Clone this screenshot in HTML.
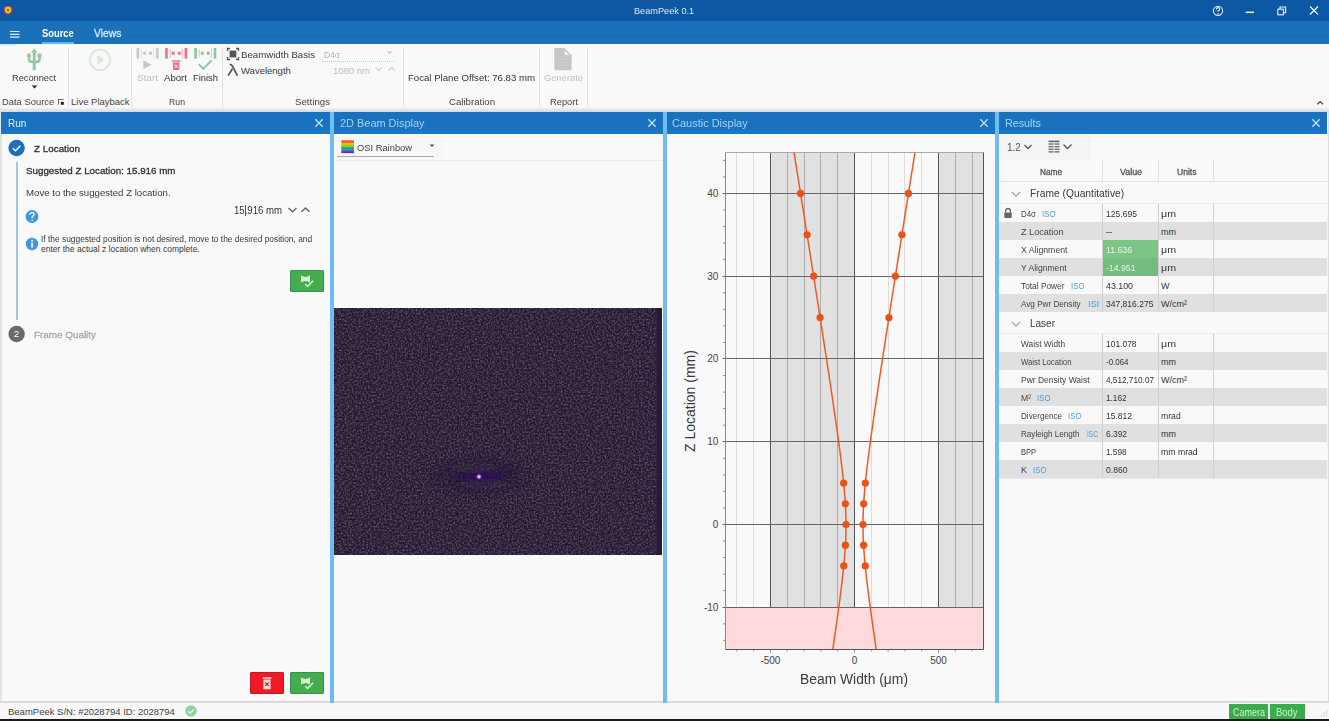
<!DOCTYPE html><html><head><meta charset="utf-8"><style>
html,body{margin:0;padding:0;width:1329px;height:721px;overflow:hidden;background:#f8f8f8}
body{position:relative;font-family:"Liberation Sans",sans-serif}
#wrap{position:absolute;left:0;top:0;width:1329px;height:721px;overflow:hidden}
.r{position:absolute;display:block}
.t{position:absolute;white-space:nowrap;line-height:1;transform-origin:0 0}
</style></head><body><div id="wrap">
<div class="r" style="left:0px;top:0px;width:1329px;height:721px;background:#f8f8f8;"></div>
<div class="r" style="left:0px;top:0px;width:1329px;height:21px;background:#0d57a3;"></div>
<svg class="r" style="left:0px;top:0px;" width="20" height="20" viewBox="0 0 20 20"><circle cx="8" cy="10" r="5.6" fill="#5a3aa0"/><circle cx="8" cy="10" r="3.4" fill="#f2c200"/><circle cx="8" cy="10" r="1.1" fill="#8a4a10"/></svg>
<div class="t" style="left:633.90px;top:6.88px;font-size:9px;color:#d6eaff;transform:scaleX(1.020);">BeamPeek 0.1</div>
<svg class="r" style="left:1200px;top:0px;" width="129" height="20" viewBox="0 0 129 20"><g fill="none" stroke="#e8f2ff" stroke-width="1.1"><circle cx="18" cy="10.8" r="4.6"/><path d="M16.3 9.4 q0-1.8 1.7-1.8 q1.7 0 1.7 1.6 q0 1.1-1.6 1.7 v0.9" /></g><circle cx="18.1" cy="13.7" r="0.6" fill="#e8f2ff"/><path d="M45.8 12.3 h8.2" stroke="#e8f2ff" stroke-width="1.5"/><g fill="none" stroke="#e8f2ff" stroke-width="1.1"><rect x="77.8" y="9.2" width="5.6" height="5.6"/><path d="M80 9.2 v-2.2 h5.6 v5.6 h-2.2"/></g><path d="M110 6.5 l8 8 M118 6.5 l-8 8" stroke="#e8f2ff" stroke-width="1.3"/></svg>
<div class="r" style="left:0px;top:21px;width:1329px;height:23px;background:#1b70ba;"></div>
<div class="r" style="left:128px;top:34.5px;width:1201px;height:1.0px;background:#1968ae;"></div>
<svg class="r" style="left:8px;top:28px;" width="14" height="12" viewBox="0 0 14 12"><path d="M2 3.5 h9.5 M2 6.3 h9.5 M2 9.1 h9.5" stroke="#d8ecff" stroke-width="1.2"/></svg>
<div class="t" style="left:41.60px;top:27.71px;font-size:10.5px;color:#ffffff;font-weight:bold;transform:scaleX(0.891);">Source</div>
<div class="r" style="left:41.5px;top:42px;width:32.5px;height:2px;background:#5fb4f3;"></div>
<div class="t" style="left:94.00px;top:27.91px;font-size:10.5px;color:#d2e8fc;-webkit-text-stroke:0.3px #d2e8fc;transform:scaleX(0.981);">Views</div>
<div class="r" style="left:0px;top:44px;width:1329px;height:66px;background:#f9f9f9;"></div>
<div class="r" style="left:0px;top:108px;width:1329px;height:4px;background:linear-gradient(#f2f2f2,#d6d6d6);"></div>
<div class="r" style="left:0px;top:44px;width:16px;height:2px;background:#dff1fd;"></div>
<div class="r" style="left:68px;top:48px;width:1px;height:59px;background:#e2e2e2;"></div>
<div class="r" style="left:131px;top:48px;width:1px;height:59px;background:#e2e2e2;"></div>
<div class="r" style="left:222px;top:48px;width:1px;height:59px;background:#e2e2e2;"></div>
<div class="r" style="left:403px;top:48px;width:1px;height:59px;background:#e2e2e2;"></div>
<div class="r" style="left:539px;top:48px;width:1px;height:59px;background:#e2e2e2;"></div>
<div class="r" style="left:587px;top:48px;width:1px;height:59px;background:#e2e2e2;"></div>
<svg class="r" style="left:24px;top:46px;" width="20" height="26" viewBox="0 0 20 26"><g fill="#97c8a1" stroke="#97c8a1"><path d="M10.2 2.6 l3.2 4 h-1.7 v17.6 h-3 v-17.6 h-1.7 z" stroke="none"/><path d="M5 10 v3.2 q0 2.6 2.6 2.6 h5" fill="none" stroke-width="2.6"/><path d="M15.5 10 v3.2 q0 2.6 -2.6 2.6 h-3" fill="none" stroke-width="2.6"/><circle cx="5" cy="9.4" r="2.1" stroke="none"/><rect x="13.4" y="7.6" width="4.2" height="3.8" stroke="none"/></g></svg>
<div class="t" style="left:11.70px;top:73.36px;font-size:9.5px;color:#3a3a3a;transform:scaleX(0.973);">Reconnect</div>
<svg class="r" style="left:30px;top:84px;" width="9" height="6" viewBox="0 0 9 6"><path d="M1.8 1.6 h5.4 l-2.7 2.8 z" fill="#222"/></svg>
<div class="t" style="left:1.80px;top:97.36px;font-size:9.5px;color:#444;transform:scaleX(0.989);">Data Source</div>
<svg class="r" style="left:57px;top:98px;" width="8" height="8" viewBox="0 0 8 8"><path d="M1.5 6.5 v-5 h5" stroke="#666" stroke-width="1.1" fill="none"/><rect x="3.8" y="3.8" width="3" height="3" fill="#222"/></svg>
<svg class="r" style="left:86px;top:46px;" width="28" height="28" viewBox="0 0 28 28"><circle cx="14" cy="13.8" r="10.2" fill="none" stroke="#d5ead8" stroke-width="1.8"/><path d="M11.4 8.8 l7 5 l-7 5 z" fill="#d5ead8"/></svg>
<div class="t" style="left:71.00px;top:97.36px;font-size:9.5px;color:#444;">Live Playback</div>
<svg class="r" style="left:0px;top:0px;pointer-events:none" width="230" height="80" viewBox="0 0 230 80"><rect x="136.6" y="48" width="2.6" height="10.6" fill="#c9c9c9"/><rect x="156.0" y="48" width="2.6" height="10.6" fill="#c9c9c9"/><rect x="141.1" y="49" width="0.9" height="8.6" fill="#c9c9c9" opacity="0.6"/><rect x="153.2" y="49" width="0.9" height="8.6" fill="#c9c9c9" opacity="0.6"/><rect x="143.2" y="51.6" width="2.8" height="3.2" fill="#c9c9c9"/><rect x="149.2" y="51.6" width="2.8" height="3.2" fill="#c9c9c9"/><path d="M143.3 60.6 l8.3 4.2 l-8.3 4.2 z" fill="#c6c6c6"/><rect x="165.2" y="48" width="2.6" height="10.6" fill="#ec7482"/><rect x="184.6" y="48" width="2.6" height="10.6" fill="#ec7482"/><rect x="169.7" y="49" width="0.9" height="8.6" fill="#ec7482" opacity="0.6"/><rect x="181.79999999999998" y="49" width="0.9" height="8.6" fill="#ec7482" opacity="0.6"/><rect x="171.79999999999998" y="51.6" width="2.8" height="3.2" fill="#ec7482"/><rect x="177.79999999999998" y="51.6" width="2.8" height="3.2" fill="#ec7482"/><path d="M171.8 60.2 h8.6 v1.6 h-8.6 z M172.6 62.4 h7 l-0.6 7.6 h-5.8 z" fill="#ec7482"/><path d="M174.6 64.6 l3 3 M177.6 64.6 l-3 3" stroke="#fff" stroke-width="0.9"/><rect x="194.3" y="48" width="2.6" height="10.6" fill="#8fc59b"/><rect x="213.70000000000002" y="48" width="2.6" height="10.6" fill="#8fc59b"/><rect x="198.8" y="49" width="0.9" height="8.6" fill="#8fc59b" opacity="0.6"/><rect x="210.9" y="49" width="0.9" height="8.6" fill="#8fc59b" opacity="0.6"/><rect x="200.9" y="51.6" width="2.8" height="3.2" fill="#8fc59b"/><rect x="206.9" y="51.6" width="2.8" height="3.2" fill="#8fc59b"/><path d="M198.8 64.2 l4.4 4.6 l8.4 -8.4" fill="none" stroke="#8fc59b" stroke-width="1.9"/></svg>
<div class="t" style="left:137.00px;top:73.36px;font-size:9.5px;color:#bdbdbd;transform:scaleX(1.047);">Start</div>
<div class="t" style="left:164.00px;top:73.36px;font-size:9.5px;color:#333;transform:scaleX(1.013);">Abort</div>
<div class="t" style="left:193.00px;top:73.36px;font-size:9.5px;color:#333;transform:scaleX(0.987);">Finish</div>
<div class="t" style="left:169.00px;top:97.36px;font-size:9.5px;color:#444;transform:scaleX(0.918);">Run</div>
<svg class="r" style="left:226px;top:47px;" width="14" height="14" viewBox="0 0 14 14"><path d="M1.5 4 v-2.5 h2.5 M10 1.5 h2.5 v2.5 M12.5 10 v2.5 h-2.5 M4 12.5 h-2.5 v-2.5" fill="none" stroke="#555" stroke-width="1.4"/><rect x="3.6" y="3.6" width="6.8" height="6.8" fill="#555"/></svg>
<div class="t" style="left:241.00px;top:50.16px;font-size:9.5px;color:#3a3a3a;transform:scaleX(1.016);">Beamwidth Basis</div>
<div class="t" style="left:324.00px;top:50.16px;font-size:9.5px;color:#b4b4b4;transform:scaleX(0.889);">D4σ</div>
<svg class="r" style="left:386px;top:50px;" width="8" height="6" viewBox="0 0 8 6"><path d="M1 1.5 h5 l-2.5 2.6 z" fill="#c4c4c4"/></svg>
<div class="r" style="left:322px;top:61px;width:72px;height:0;border-top:1px dotted #c8c8c8"></div>
<svg class="r" style="left:226px;top:63px;" width="14" height="14" viewBox="0 0 14 14"><path d="M2.2 12.6 l4.2 -6.8 M3.6 1.4 q2.2 0 3 2 l4.8 9.2" fill="none" stroke="#555" stroke-width="1.7"/></svg>
<div class="t" style="left:241.00px;top:65.96px;font-size:9.5px;color:#3a3a3a;">Wavelength</div>
<div class="t" style="left:333.00px;top:65.96px;font-size:9.5px;color:#c0c0c0;">1080 nm</div>
<svg class="r" style="left:372px;top:64px;" width="28" height="10" viewBox="0 0 28 10"><path d="M3.5 3.5 l3.2 3 l3.2 -3" fill="none" stroke="#cfcfcf" stroke-width="1.2"/><path d="M16.5 6.5 l3.2 -3 l3.2 3" fill="none" stroke="#cfcfcf" stroke-width="1.2"/></svg>
<div class="t" style="left:295.00px;top:97.36px;font-size:9.5px;color:#444;transform:scaleX(1.020);">Settings</div>
<div class="t" style="left:408.00px;top:72.56px;font-size:9.5px;color:#333;transform:scaleX(1.012);">Focal Plane Offset: 76.83 mm</div>
<div class="t" style="left:449.00px;top:97.36px;font-size:9.5px;color:#444;transform:scaleX(1.013);">Calibration</div>
<svg class="r" style="left:550px;top:46px;" width="26" height="28" viewBox="0 0 26 28"><path d="M4.2 2 h10.3 l7.2 7.2 v15.1 h-17.5 z" fill="#cbcbcb"/><path d="M14.6 4.6 l4.6 4.6 h-4.6 z" fill="#fafafa"/><rect x="7" y="12" width="9" height="11" fill="#e3c6cc" opacity="0.55"/><g stroke="#bdbdbd" stroke-width="0.5"><path d="M5 6 h9 M5 9 h16 M5 12 h16 M5 15 h16 M5 18 h16 M5 21 h16 M7 2 v22 M10 2 v22 M13 2 v22 M16 9 v15 M19 9 v15"/></g></svg>
<div class="t" style="left:544.00px;top:72.56px;font-size:9.5px;color:#c4c4c4;transform:scaleX(0.985);">Generate</div>
<div class="t" style="left:550.00px;top:97.36px;font-size:9.5px;color:#444;transform:scaleX(0.982);">Report</div>
<svg class="r" style="left:1314px;top:98px;" width="12" height="10" viewBox="0 0 12 10"><path d="M3.4 6.2 l2.8 -2.6 l2.8 2.6" fill="none" stroke="#444" stroke-width="1.3"/></svg>
<div class="r" style="left:0px;top:112px;width:1329px;height:591px;background:#f9f9f9;"></div>
<div class="r" style="left:0px;top:112px;width:1.5px;height:591px;background:#e4e4e4;"></div>
<div class="r" style="left:1327px;top:112px;width:2px;height:591px;background:#f6f6f6;"></div>
<div class="r" style="left:1327.6px;top:112px;width:1.400000000000091px;height:591px;background:#dcdcdc;"></div>
<div class="r" style="left:1px;top:112px;width:329px;height:22px;background:#1a71bd;"></div>
<div class="r" style="left:1px;top:129.5px;width:329px;height:4.5px;background:#1c76c6;"></div>
<div class="r" style="left:334px;top:112px;width:329px;height:22px;background:#1a71bd;"></div>
<div class="r" style="left:334px;top:129.5px;width:329px;height:4.5px;background:#1c76c6;"></div>
<div class="r" style="left:667px;top:112px;width:328px;height:22px;background:#1a71bd;"></div>
<div class="r" style="left:667px;top:129.5px;width:328px;height:4.5px;background:#1c76c6;"></div>
<div class="r" style="left:999px;top:112px;width:328px;height:22px;background:#1a71bd;"></div>
<div class="r" style="left:999px;top:129.5px;width:328px;height:4.5px;background:#1c76c6;"></div>
<div class="r" style="left:0px;top:701px;width:1329px;height:2px;background:#dadada;"></div>
<div class="r" style="left:330px;top:112px;width:4px;height:591px;background:#6fbcf2;"></div>
<div class="r" style="left:663px;top:112px;width:4px;height:591px;background:#6fbcf2;"></div>
<div class="r" style="left:995px;top:112px;width:4px;height:591px;background:#6fbcf2;"></div>
<svg class="r" style="left:312.5px;top:117px;" width="12" height="12" viewBox="0 0 12 12"><path d="M2.3 2.3 l7.4 7.4 M9.7 2.3 l-7.4 7.4" stroke="#c4e2fb" stroke-width="1.3"/></svg>
<svg class="r" style="left:645.5px;top:117.3px;" width="12" height="12" viewBox="0 0 12 12"><path d="M2.3 2.3 l7.4 7.4 M9.7 2.3 l-7.4 7.4" stroke="#c4e2fb" stroke-width="1.3"/></svg>
<svg class="r" style="left:978px;top:117.3px;" width="12" height="12" viewBox="0 0 12 12"><path d="M2.3 2.3 l7.4 7.4 M9.7 2.3 l-7.4 7.4" stroke="#c4e2fb" stroke-width="1.3"/></svg>
<svg class="r" style="left:1310px;top:117.3px;" width="12" height="12" viewBox="0 0 12 12"><path d="M2.3 2.3 l7.4 7.4 M9.7 2.3 l-7.4 7.4" stroke="#c4e2fb" stroke-width="1.3"/></svg>
<div class="t" style="left:7.80px;top:117.81px;font-size:10.5px;color:#e2f0fc;transform:scaleX(0.955);">Run</div>
<div class="t" style="left:339.60px;top:117.81px;font-size:10.5px;color:#a6d3f8;transform:scaleX(1.041);">2D Beam Display</div>
<div class="t" style="left:672.30px;top:117.81px;font-size:10.5px;color:#a6d3f8;transform:scaleX(1.046);">Caustic Display</div>
<div class="t" style="left:1004.80px;top:117.81px;font-size:10.5px;color:#a6d3f8;transform:scaleX(1.023);">Results</div>
<div class="r" style="left:0px;top:703px;width:1329px;height:16px;background:#f8f8f8;"></div>
<div class="r" style="left:0px;top:719px;width:1329px;height:2px;background:#1a1a1a;"></div>
<div class="t" style="left:8.00px;top:707.36px;font-size:9.5px;color:#444;">BeamPeek S/N: #2028794 ID: 2028794</div>
<svg class="r" style="left:184px;top:704px;" width="14" height="14" viewBox="0 0 14 14"><circle cx="7" cy="7" r="5.8" fill="#90d2a0"/><path d="M4.2 7.2 l2 2 l3.8 -3.8" fill="none" stroke="#fff" stroke-width="1.3"/></svg>
<div class="r" style="left:1228.6px;top:704px;width:39.40000000000009px;height:15px;background:#3cab4b;"></div>
<div class="r" style="left:1269.6px;top:704px;width:35.40000000000009px;height:15px;background:#3cab4b;"></div>
<svg class="r" style="left:1318px;top:708px;" width="11" height="11" viewBox="0 0 11 11"><g fill="#c8c8c8"><rect x="8" y="2" width="1.3" height="1.3"/><rect x="5.5" y="4.5" width="1.3" height="1.3"/><rect x="8" y="4.5" width="1.3" height="1.3"/><rect x="3" y="7" width="1.3" height="1.3"/><rect x="5.5" y="7" width="1.3" height="1.3"/><rect x="8" y="7" width="1.3" height="1.3"/></g></svg>
<div class="t" style="left:1233.00px;top:706.61px;font-size:10.5px;color:#c9f2c9;transform:scaleX(0.857);">Camera</div>
<div class="t" style="left:1276.00px;top:706.61px;font-size:10.5px;color:#c9f2c9;transform:scaleX(0.898);">Body</div>
<svg class="r" style="left:7px;top:139px;" width="20" height="18" viewBox="0 0 20 18"><circle cx="9.6" cy="9" r="8.2" fill="#1b6fbd"/><path d="M5.8 9.2 l2.6 2.6 l5 -5" fill="none" stroke="#fff" stroke-width="1.4"/></svg>
<div class="t" style="left:33.50px;top:144.26px;font-size:9.5px;color:#333;-webkit-text-stroke:0.3px #333;transform:scaleX(1.037);">Z Location</div>
<div class="r" style="left:16.3px;top:162px;width:1.5px;height:157.5px;background:#a0c4e8;"></div>
<div class="t" style="left:25.50px;top:166.46px;font-size:9.5px;color:#333;-webkit-text-stroke:0.3px #333;transform:scaleX(1.029);">Suggested Z Location: 15.916 mm</div>
<div class="t" style="left:25.50px;top:188.46px;font-size:9.5px;color:#3a3a3a;transform:scaleX(1.014);">Move to the suggested Z location.</div>
<svg class="r" style="left:24px;top:208px;" width="16" height="16" viewBox="0 0 16 16"><circle cx="8" cy="8.5" r="6.4" fill="#3d97e6"/><path d="M5.9 6.8 q0-2.2 2.1-2.2 q2.1 0 2.1 2 q0 1.3-1.9 2 v1.3" fill="none" stroke="#fff" stroke-width="1.3"/><circle cx="8.2" cy="12.1" r="0.8" fill="#fff"/></svg>
<div class="t" style="left:234.00px;top:205.84px;font-size:10px;color:#333;transform:scaleX(0.960);">15.916 mm</div>
<div class="r" style="left:245.2px;top:205px;width:0.8000000000000114px;height:10.5px;background:#555;"></div>
<svg class="r" style="left:284px;top:204px;" width="30" height="12" viewBox="0 0 30 12"><path d="M4.5 4 l4 3.8 l4 -3.8" fill="none" stroke="#666" stroke-width="1.4"/><path d="M17.5 7.8 l4 -3.8 l4 3.8" fill="none" stroke="#666" stroke-width="1.4"/></svg>
<svg class="r" style="left:24px;top:236px;" width="16" height="16" viewBox="0 0 16 16"><circle cx="8" cy="8" r="6.2" fill="#3d97e6"/><rect x="7.2" y="6.6" width="1.7" height="5" fill="#fff"/><circle cx="8.05" cy="4.8" r="0.95" fill="#fff"/></svg>
<div class="t" style="left:41.00px;top:235.40px;font-size:8.5px;color:#3a3a3a;transform:scaleX(0.986);">If the suggested position is not desired, move to the desired position, and</div>
<div class="t" style="left:41.00px;top:244.80px;font-size:8.5px;color:#3a3a3a;">enter the actual z location when complete.</div>
<div class="r" style="left:290px;top:270px;width:34.19999999999999px;height:22px;background:#45ad4f;border-radius:2px;box-shadow:inset 0 0 0 1px #368f55"></div>
<svg class="r" style="left:298.1px;top:273.0px;" width="18" height="16" viewBox="0 0 18 16"><path d="M3 2.2 Q7.5 5.6 12 2.2 V9.6 Q7.5 6.2 3 9.6 Z" fill="#d6f5cf"/><path d="M7.2 11 l2.4 2.4 l5.6 -5.6" fill="none" stroke="#d6f5cf" stroke-width="1.5"/></svg>
<svg class="r" style="left:7px;top:325px;" width="20" height="18" viewBox="0 0 20 18"><circle cx="9.6" cy="9" r="8.2" fill="#6a6a6a"/></svg>
<div class="t" style="left:14.00px;top:330.18px;font-size:9px;color:#fff;transform:scaleX(1.039);">2</div>
<div class="t" style="left:33.50px;top:329.76px;font-size:9.5px;color:#a8a8a8;-webkit-text-stroke:0.3px #a8a8a8;transform:scaleX(1.039);">Frame Quality</div>
<div class="r" style="left:249.7px;top:672px;width:34.30000000000001px;height:22px;background:#ee1b24;border-radius:2px;box-shadow:inset 0 0 0 1px #c0192a"></div>
<svg class="r" style="left:258px;top:674px;" width="18" height="18" viewBox="0 0 18 18"><path d="M4.6 3.2 h8.8 v1.6 h-8.8 z M5.4 5.6 h7.2 v9.6 h-7.2 z" fill="#ffd9dc"/><path d="M7.3 8.5 l3.4 3.4 M10.7 8.5 l-3.4 3.4" stroke="#d01a26" stroke-width="1.1"/></svg>
<div class="r" style="left:290px;top:672px;width:34.19999999999999px;height:22px;background:#45ad4f;border-radius:2px;box-shadow:inset 0 0 0 1px #368f55"></div>
<svg class="r" style="left:298.1px;top:675.0px;" width="18" height="16" viewBox="0 0 18 16"><path d="M3 2.2 Q7.5 5.6 12 2.2 V9.6 Q7.5 6.2 3 9.6 Z" fill="#d6f5cf"/><path d="M7.2 11 l2.4 2.4 l5.6 -5.6" fill="none" stroke="#d6f5cf" stroke-width="1.5"/></svg>
<div class="r" style="left:334px;top:134px;width:109px;height:26px;background:#f7f7f7;"></div>
<div class="r" style="left:334px;top:159.5px;width:329px;height:1.0px;background:#ececec;"></div>
<svg class="r" style="left:341px;top:139.5px;" width="14" height="14" viewBox="0 0 14 14"><rect x="0.3" y="0.3" width="12.7" height="2.6" fill="#f05a28"/><rect x="0.3" y="2.9" width="12.7" height="2.1" fill="#f7b800"/><rect x="0.3" y="5" width="12.7" height="2.1" fill="#8bd400"/><rect x="0.3" y="7.1" width="12.7" height="2.1" fill="#00b36b"/><rect x="0.3" y="9.2" width="12.7" height="1.9" fill="#1a7cf0"/><rect x="0.3" y="11.1" width="12.7" height="2.0" fill="#8b1aa8"/></svg>
<div class="t" style="left:357.00px;top:142.56px;font-size:9.5px;color:#444;transform:scaleX(0.983);">OSI Rainbow</div>
<svg class="r" style="left:428px;top:143px;" width="10" height="6" viewBox="0 0 10 6"><path d="M1.5 1.5 h5 l-2.5 2.6 z" fill="#555"/></svg>
<div class="r" style="left:337px;top:156px;width:97px;height:1px;background:#a8a8a8;"></div>
<svg class="r" style="left:334px;top:308px;" width="328" height="247" viewBox="0 0 328 247"><defs><filter id="nz" x="0" y="0" width="100%" height="100%"><feTurbulence type="fractalNoise" baseFrequency="0.55" numOctaves="2" seed="7" result="t"/><feColorMatrix type="matrix" values="0 0 0 0 0.30  0 0 0 0 0.28  0 0 0 0 0.32  0 0 0 1.1 -0.42"/><feGaussianBlur stdDeviation="0.45"/></filter><radialGradient id="spot"><stop offset="0" stop-color="#fff"/><stop offset="0.3" stop-color="#e8a0ff"/><stop offset="1" stop-color="#6010a0" stop-opacity="0"/></radialGradient><radialGradient id="halo"><stop offset="0" stop-color="#2a0a60" stop-opacity="0.9"/><stop offset="1" stop-color="#2a0a60" stop-opacity="0"/></radialGradient><radialGradient id="halo2"><stop offset="0" stop-color="#1c0c38" stop-opacity="0.55"/><stop offset="0.7" stop-color="#1c0c38" stop-opacity="0.25"/><stop offset="1" stop-color="#1c0c38" stop-opacity="0"/></radialGradient></defs><rect width="328" height="247" fill="#251832"/><rect width="328" height="247" filter="url(#nz)"/><ellipse cx="146" cy="168" rx="58" ry="24" fill="url(#halo2)"/><ellipse cx="140" cy="160" rx="22" ry="5" fill="#6a6a50" opacity="0.12"/><ellipse cx="150" cy="176" rx="24" ry="5" fill="#6a6a60" opacity="0.12"/><ellipse cx="148" cy="168.5" rx="34" ry="7" fill="url(#halo)"/><circle cx="145" cy="168.7" r="3.5" fill="url(#spot)"/><rect x="322" y="0" width="6" height="247" fill="#1e1a2c" opacity="0.75"/><rect x="322" y="0" width="0.8" height="247" fill="#5a1a70" opacity="0.6"/></svg>
<svg class="r" style="left:0;top:0" width="1329" height="721" viewBox="0 0 1329 721"><defs><clipPath id="pc"><rect x="725.5" y="152.5" width="258.0" height="497.0"/></clipPath></defs><g clip-path="url(#pc)"><rect x="725.5" y="152.5" width="258.0" height="497.0" fill="#f9f9f9"/><rect x="770.40" y="152.5" width="84.10" height="454.76" fill="#e1e1e1"/><rect x="938.60" y="152.5" width="44.90" height="454.76" fill="#e1e1e1"/><rect x="725.5" y="607.26" width="258.0" height="42.24" fill="#fddadb"/></g><line x1="736.50" y1="152.5" x2="736.50" y2="607.26" stroke="#dcdcdc" stroke-width="1"/><line x1="753.50" y1="152.5" x2="753.50" y2="607.26" stroke="#dcdcdc" stroke-width="1"/><line x1="787.50" y1="152.5" x2="787.50" y2="607.26" stroke="#ababab" stroke-width="1"/><line x1="804.50" y1="152.5" x2="804.50" y2="607.26" stroke="#ababab" stroke-width="1"/><line x1="820.50" y1="152.5" x2="820.50" y2="607.26" stroke="#ababab" stroke-width="1"/><line x1="837.50" y1="152.5" x2="837.50" y2="607.26" stroke="#ababab" stroke-width="1"/><line x1="871.50" y1="152.5" x2="871.50" y2="607.26" stroke="#dcdcdc" stroke-width="1"/><line x1="888.50" y1="152.5" x2="888.50" y2="607.26" stroke="#dcdcdc" stroke-width="1"/><line x1="904.50" y1="152.5" x2="904.50" y2="607.26" stroke="#dcdcdc" stroke-width="1"/><line x1="921.50" y1="152.5" x2="921.50" y2="607.26" stroke="#dcdcdc" stroke-width="1"/><line x1="955.50" y1="152.5" x2="955.50" y2="607.26" stroke="#ababab" stroke-width="1"/><line x1="972.50" y1="152.5" x2="972.50" y2="607.26" stroke="#ababab" stroke-width="1"/><line x1="770.50" y1="152.5" x2="770.50" y2="607.26" stroke="#555" stroke-width="1"/><line x1="854.50" y1="152.5" x2="854.50" y2="607.26" stroke="#555" stroke-width="1"/><line x1="938.50" y1="152.5" x2="938.50" y2="607.26" stroke="#555" stroke-width="1"/><line x1="722.5" y1="607.50" x2="983.5" y2="607.50" stroke="#666" stroke-width="1"/><line x1="722.5" y1="524.50" x2="983.5" y2="524.50" stroke="#666" stroke-width="1"/><line x1="722.5" y1="441.50" x2="983.5" y2="441.50" stroke="#666" stroke-width="1"/><line x1="722.5" y1="358.50" x2="983.5" y2="358.50" stroke="#666" stroke-width="1"/><line x1="722.5" y1="276.50" x2="983.5" y2="276.50" stroke="#666" stroke-width="1"/><line x1="722.5" y1="193.50" x2="983.5" y2="193.50" stroke="#666" stroke-width="1"/><line x1="723.0" y1="640.36" x2="725.5" y2="640.36" stroke="#777" stroke-width="0.8"/><line x1="723.0" y1="623.81" x2="725.5" y2="623.81" stroke="#777" stroke-width="0.8"/><line x1="723.0" y1="590.71" x2="725.5" y2="590.71" stroke="#777" stroke-width="0.8"/><line x1="723.0" y1="574.16" x2="725.5" y2="574.16" stroke="#777" stroke-width="0.8"/><line x1="723.0" y1="557.60" x2="725.5" y2="557.60" stroke="#777" stroke-width="0.8"/><line x1="723.0" y1="541.05" x2="725.5" y2="541.05" stroke="#777" stroke-width="0.8"/><line x1="723.0" y1="507.95" x2="725.5" y2="507.95" stroke="#777" stroke-width="0.8"/><line x1="723.0" y1="491.40" x2="725.5" y2="491.40" stroke="#777" stroke-width="0.8"/><line x1="723.0" y1="474.84" x2="725.5" y2="474.84" stroke="#777" stroke-width="0.8"/><line x1="723.0" y1="458.29" x2="725.5" y2="458.29" stroke="#777" stroke-width="0.8"/><line x1="723.0" y1="425.19" x2="725.5" y2="425.19" stroke="#777" stroke-width="0.8"/><line x1="723.0" y1="408.64" x2="725.5" y2="408.64" stroke="#777" stroke-width="0.8"/><line x1="723.0" y1="392.08" x2="725.5" y2="392.08" stroke="#777" stroke-width="0.8"/><line x1="723.0" y1="375.53" x2="725.5" y2="375.53" stroke="#777" stroke-width="0.8"/><line x1="723.0" y1="342.43" x2="725.5" y2="342.43" stroke="#777" stroke-width="0.8"/><line x1="723.0" y1="325.88" x2="725.5" y2="325.88" stroke="#777" stroke-width="0.8"/><line x1="723.0" y1="309.32" x2="725.5" y2="309.32" stroke="#777" stroke-width="0.8"/><line x1="723.0" y1="292.77" x2="725.5" y2="292.77" stroke="#777" stroke-width="0.8"/><line x1="723.0" y1="259.67" x2="725.5" y2="259.67" stroke="#777" stroke-width="0.8"/><line x1="723.0" y1="243.12" x2="725.5" y2="243.12" stroke="#777" stroke-width="0.8"/><line x1="723.0" y1="226.56" x2="725.5" y2="226.56" stroke="#777" stroke-width="0.8"/><line x1="723.0" y1="210.01" x2="725.5" y2="210.01" stroke="#777" stroke-width="0.8"/><line x1="723.0" y1="176.91" x2="725.5" y2="176.91" stroke="#777" stroke-width="0.8"/><line x1="723.0" y1="160.36" x2="725.5" y2="160.36" stroke="#777" stroke-width="0.8"/><line x1="736.76" y1="649.5" x2="736.76" y2="651.5" stroke="#777" stroke-width="0.8"/><line x1="753.58" y1="649.5" x2="753.58" y2="651.5" stroke="#777" stroke-width="0.8"/><line x1="770.40" y1="649.5" x2="770.40" y2="652.5" stroke="#777" stroke-width="0.8"/><line x1="787.22" y1="649.5" x2="787.22" y2="651.5" stroke="#777" stroke-width="0.8"/><line x1="804.04" y1="649.5" x2="804.04" y2="651.5" stroke="#777" stroke-width="0.8"/><line x1="820.86" y1="649.5" x2="820.86" y2="651.5" stroke="#777" stroke-width="0.8"/><line x1="837.68" y1="649.5" x2="837.68" y2="651.5" stroke="#777" stroke-width="0.8"/><line x1="854.50" y1="649.5" x2="854.50" y2="652.5" stroke="#777" stroke-width="0.8"/><line x1="871.32" y1="649.5" x2="871.32" y2="651.5" stroke="#777" stroke-width="0.8"/><line x1="888.14" y1="649.5" x2="888.14" y2="651.5" stroke="#777" stroke-width="0.8"/><line x1="904.96" y1="649.5" x2="904.96" y2="651.5" stroke="#777" stroke-width="0.8"/><line x1="921.78" y1="649.5" x2="921.78" y2="651.5" stroke="#777" stroke-width="0.8"/><line x1="938.60" y1="649.5" x2="938.60" y2="652.5" stroke="#777" stroke-width="0.8"/><line x1="955.42" y1="649.5" x2="955.42" y2="651.5" stroke="#777" stroke-width="0.8"/><line x1="972.24" y1="649.5" x2="972.24" y2="651.5" stroke="#777" stroke-width="0.8"/><line x1="725.5" y1="152.5" x2="983.5" y2="152.5" stroke="#aaa" stroke-width="1"/><line x1="983.5" y1="152.5" x2="983.5" y2="649.5" stroke="#555" stroke-width="1"/><line x1="725.5" y1="152.5" x2="725.5" y2="649.5" stroke="#888" stroke-width="1"/><line x1="725.5" y1="649.5" x2="983.5" y2="649.5" stroke="#555" stroke-width="1"/><g clip-path="url(#pc)"><polyline points="793.71,150.42 794.04,152.49 794.36,154.56 794.69,156.63 795.02,158.70 795.35,160.77 795.68,162.84 796.01,164.91 796.34,166.98 796.67,169.05 797.00,171.11 797.33,173.18 797.65,175.25 797.98,177.32 798.31,179.39 798.64,181.46 798.97,183.53 799.30,185.60 799.63,187.67 799.95,189.74 800.28,191.80 800.61,193.87 800.94,195.94 801.27,198.01 801.60,200.08 801.92,202.15 802.25,204.22 802.58,206.29 802.91,208.36 803.24,210.43 803.56,212.49 803.89,214.56 804.22,216.63 804.55,218.70 804.87,220.77 805.20,222.84 805.53,224.91 805.86,226.98 806.18,229.05 806.51,231.12 806.84,233.18 807.17,235.25 807.49,237.32 807.82,239.39 808.15,241.46 808.47,243.53 808.80,245.60 809.13,247.67 809.45,249.74 809.78,251.81 810.11,253.87 810.43,255.94 810.76,258.01 811.08,260.08 811.41,262.15 811.74,264.22 812.06,266.29 812.39,268.36 812.71,270.43 813.04,272.50 813.36,274.56 813.69,276.63 814.01,278.70 814.34,280.77 814.66,282.84 814.99,284.91 815.31,286.98 815.64,289.05 815.96,291.12 816.29,293.19 816.61,295.25 816.93,297.32 817.26,299.39 817.58,301.46 817.91,303.53 818.23,305.60 818.55,307.67 818.88,309.74 819.20,311.81 819.52,313.88 819.84,315.94 820.17,318.01 820.49,320.08 820.81,322.15 821.13,324.22 821.45,326.29 821.77,328.36 822.09,330.43 822.41,332.50 822.74,334.57 823.06,336.63 823.38,338.70 823.70,340.77 824.01,342.84 824.33,344.91 824.65,346.98 824.97,349.05 825.29,351.12 825.61,353.19 825.92,355.26 826.24,357.32 826.56,359.39 826.88,361.46 827.19,363.53 827.51,365.60 827.82,367.67 828.14,369.74 828.45,371.81 828.77,373.88 829.08,375.95 829.39,378.01 829.71,380.08 830.02,382.15 830.33,384.22 830.64,386.29 830.95,388.36 831.26,390.43 831.57,392.50 831.88,394.57 832.19,396.64 832.49,398.70 832.80,400.77 833.10,402.84 833.41,404.91 833.71,406.98 834.02,409.05 834.32,411.12 834.62,413.19 834.92,415.26 835.22,417.33 835.52,419.39 835.81,421.46 836.11,423.53 836.40,425.60 836.69,427.67 836.99,429.74 837.28,431.81 837.56,433.88 837.85,435.95 838.14,438.02 838.42,440.08 838.70,442.15 838.98,444.22 839.26,446.29 839.53,448.36 839.80,450.43 840.07,452.50 840.34,454.57 840.61,456.64 840.87,458.71 841.13,460.77 841.38,462.84 841.63,464.91 841.88,466.98 842.12,469.05 842.36,471.12 842.60,473.19 842.83,475.26 843.05,477.33 843.27,479.40 843.49,481.46 843.70,483.53 843.90,485.60 844.09,487.67 844.28,489.74 844.46,491.81 844.63,493.88 844.80,495.95 844.96,498.02 845.10,500.09 845.24,502.15 845.37,504.22 845.48,506.29 845.59,508.36 845.68,510.43 845.76,512.50 845.83,514.57 845.89,516.64 845.94,518.71 845.97,520.78 845.99,522.84 846.00,524.91 845.99,526.98 845.97,529.05 845.94,531.12 845.90,533.19 845.84,535.26 845.77,537.33 845.69,539.40 845.60,541.47 845.49,543.53 845.38,545.60 845.25,547.67 845.12,549.74 844.97,551.81 844.82,553.88 844.65,555.95 844.48,558.02 844.30,560.09 844.11,562.16 843.92,564.22 843.72,566.29 843.51,568.36 843.30,570.43 843.08,572.50 842.85,574.57 842.62,576.64 842.39,578.71 842.15,580.78 841.91,582.85 841.66,584.91 841.41,586.98 841.15,589.05 840.90,591.12 840.64,593.19 840.37,595.26 840.10,597.33 839.83,599.40 839.56,601.47 839.29,603.54 839.01,605.60 838.73,607.67 838.45,609.74 838.17,611.81 837.88,613.88 837.60,615.95 837.31,618.02 837.02,620.09 836.73,622.16 836.43,624.23 836.14,626.29 835.85,628.36 835.55,630.43 835.25,632.50 834.95,634.57 834.65,636.64 834.35,638.71 834.05,640.78 833.75,642.85 833.44,644.92 833.14,646.98 832.83,649.05" fill="none" stroke="#ef5a22" stroke-width="1.5"/><polyline points="915.29,150.42 914.96,152.49 914.64,154.56 914.31,156.63 913.98,158.70 913.65,160.77 913.32,162.84 912.99,164.91 912.66,166.98 912.33,169.05 912.00,171.11 911.67,173.18 911.35,175.25 911.02,177.32 910.69,179.39 910.36,181.46 910.03,183.53 909.70,185.60 909.37,187.67 909.05,189.74 908.72,191.80 908.39,193.87 908.06,195.94 907.73,198.01 907.40,200.08 907.08,202.15 906.75,204.22 906.42,206.29 906.09,208.36 905.76,210.43 905.44,212.49 905.11,214.56 904.78,216.63 904.45,218.70 904.13,220.77 903.80,222.84 903.47,224.91 903.14,226.98 902.82,229.05 902.49,231.12 902.16,233.18 901.83,235.25 901.51,237.32 901.18,239.39 900.85,241.46 900.53,243.53 900.20,245.60 899.87,247.67 899.55,249.74 899.22,251.81 898.89,253.87 898.57,255.94 898.24,258.01 897.92,260.08 897.59,262.15 897.26,264.22 896.94,266.29 896.61,268.36 896.29,270.43 895.96,272.50 895.64,274.56 895.31,276.63 894.99,278.70 894.66,280.77 894.34,282.84 894.01,284.91 893.69,286.98 893.36,289.05 893.04,291.12 892.71,293.19 892.39,295.25 892.07,297.32 891.74,299.39 891.42,301.46 891.09,303.53 890.77,305.60 890.45,307.67 890.12,309.74 889.80,311.81 889.48,313.88 889.16,315.94 888.83,318.01 888.51,320.08 888.19,322.15 887.87,324.22 887.55,326.29 887.23,328.36 886.91,330.43 886.59,332.50 886.26,334.57 885.94,336.63 885.62,338.70 885.30,340.77 884.99,342.84 884.67,344.91 884.35,346.98 884.03,349.05 883.71,351.12 883.39,353.19 883.08,355.26 882.76,357.32 882.44,359.39 882.12,361.46 881.81,363.53 881.49,365.60 881.18,367.67 880.86,369.74 880.55,371.81 880.23,373.88 879.92,375.95 879.61,378.01 879.29,380.08 878.98,382.15 878.67,384.22 878.36,386.29 878.05,388.36 877.74,390.43 877.43,392.50 877.12,394.57 876.81,396.64 876.51,398.70 876.20,400.77 875.90,402.84 875.59,404.91 875.29,406.98 874.98,409.05 874.68,411.12 874.38,413.19 874.08,415.26 873.78,417.33 873.48,419.39 873.19,421.46 872.89,423.53 872.60,425.60 872.31,427.67 872.01,429.74 871.72,431.81 871.44,433.88 871.15,435.95 870.86,438.02 870.58,440.08 870.30,442.15 870.02,444.22 869.74,446.29 869.47,448.36 869.20,450.43 868.93,452.50 868.66,454.57 868.39,456.64 868.13,458.71 867.87,460.77 867.62,462.84 867.37,464.91 867.12,466.98 866.88,469.05 866.64,471.12 866.40,473.19 866.17,475.26 865.95,477.33 865.73,479.40 865.51,481.46 865.30,483.53 865.10,485.60 864.91,487.67 864.72,489.74 864.54,491.81 864.37,493.88 864.20,495.95 864.04,498.02 863.90,500.09 863.76,502.15 863.63,504.22 863.52,506.29 863.41,508.36 863.32,510.43 863.24,512.50 863.17,514.57 863.11,516.64 863.06,518.71 863.03,520.78 863.01,522.84 863.00,524.91 863.01,526.98 863.03,529.05 863.06,531.12 863.10,533.19 863.16,535.26 863.23,537.33 863.31,539.40 863.40,541.47 863.51,543.53 863.62,545.60 863.75,547.67 863.88,549.74 864.03,551.81 864.18,553.88 864.35,555.95 864.52,558.02 864.70,560.09 864.89,562.16 865.08,564.22 865.28,566.29 865.49,568.36 865.70,570.43 865.92,572.50 866.15,574.57 866.38,576.64 866.61,578.71 866.85,580.78 867.09,582.85 867.34,584.91 867.59,586.98 867.85,589.05 868.10,591.12 868.36,593.19 868.63,595.26 868.90,597.33 869.17,599.40 869.44,601.47 869.71,603.54 869.99,605.60 870.27,607.67 870.55,609.74 870.83,611.81 871.12,613.88 871.40,615.95 871.69,618.02 871.98,620.09 872.27,622.16 872.57,624.23 872.86,626.29 873.15,628.36 873.45,630.43 873.75,632.50 874.05,634.57 874.35,636.64 874.65,638.71 874.95,640.78 875.25,642.85 875.56,644.92 875.86,646.98 876.17,649.05" fill="none" stroke="#ef5a22" stroke-width="1.5"/><circle cx="800.55" cy="193.46" r="3.6" fill="#ee4f12"/><circle cx="908.45" cy="193.46" r="3.6" fill="#ee4f12"/><circle cx="807.10" cy="234.84" r="3.6" fill="#ee4f12"/><circle cx="901.90" cy="234.84" r="3.6" fill="#ee4f12"/><circle cx="813.62" cy="276.22" r="3.6" fill="#ee4f12"/><circle cx="895.38" cy="276.22" r="3.6" fill="#ee4f12"/><circle cx="820.10" cy="317.60" r="3.6" fill="#ee4f12"/><circle cx="888.90" cy="317.60" r="3.6" fill="#ee4f12"/><circle cx="843.65" cy="483.12" r="3.6" fill="#ee4f12"/><circle cx="865.35" cy="483.12" r="3.6" fill="#ee4f12"/><circle cx="845.34" cy="503.81" r="3.6" fill="#ee4f12"/><circle cx="863.66" cy="503.81" r="3.6" fill="#ee4f12"/><circle cx="846.00" cy="524.50" r="3.6" fill="#ee4f12"/><circle cx="863.00" cy="524.50" r="3.6" fill="#ee4f12"/><circle cx="845.40" cy="545.19" r="3.6" fill="#ee4f12"/><circle cx="863.60" cy="545.19" r="3.6" fill="#ee4f12"/><circle cx="843.76" cy="565.88" r="3.6" fill="#ee4f12"/><circle cx="865.24" cy="565.88" r="3.6" fill="#ee4f12"/></g></svg>
<div class="t" style="left:703.95px;top:602.59px;font-size:10px;color:#444;">-10</div>
<div class="t" style="left:712.84px;top:519.83px;font-size:10px;color:#444;">0</div>
<div class="t" style="left:707.28px;top:437.08px;font-size:10px;color:#444;">10</div>
<div class="t" style="left:707.28px;top:354.32px;font-size:10px;color:#444;">20</div>
<div class="t" style="left:707.28px;top:271.56px;font-size:10px;color:#444;">30</div>
<div class="t" style="left:707.28px;top:188.80px;font-size:10px;color:#444;">40</div>
<div class="t" style="left:760.39px;top:655.93px;font-size:10px;color:#444;">-500</div>
<div class="t" style="left:851.72px;top:655.93px;font-size:10px;color:#444;">0</div>
<div class="t" style="left:930.26px;top:655.93px;font-size:10px;color:#444;">500</div>
<div class="t" style="left:800.40px;top:671.65px;font-size:14px;color:#3a3a3a;transform:scaleX(0.989);">Beam Width (μm)</div>
<div class="t" style="left:683.15px;top:452.3px;font-size:14px;color:#3a3a3a;transform:rotate(-90deg) scaleX(1.000);transform-origin:0 0">Z Location (mm)</div>
<div class="r" style="left:999px;top:134px;width:92px;height:26px;background:#f4f4f4;"></div>
<div class="t" style="left:1007.40px;top:142.53px;font-size:10px;color:#555;transform:scaleX(0.993);">1.2</div>
<svg class="r" style="left:1022px;top:142px;" width="12" height="10" viewBox="0 0 12 10"><path d="M2.5 3 l3.5 3.5 l3.5 -3.5" fill="none" stroke="#555" stroke-width="1.3"/></svg>
<svg class="r" style="left:1046px;top:139px;" width="16" height="16" viewBox="0 0 16 16"><g fill="#666"><rect x="2.5" y="1.6" width="11" height="1.6"/><rect x="2.5" y="4.4" width="5" height="1.3"/><rect x="8.5" y="4.4" width="5" height="1.3"/><rect x="2.5" y="7.0" width="5" height="1.3"/><rect x="8.5" y="7.0" width="5" height="1.3"/><rect x="2.5" y="9.6" width="5" height="1.3"/><rect x="8.5" y="9.6" width="5" height="1.3"/><rect x="2.5" y="12.2" width="5" height="1.3"/><rect x="8.5" y="12.2" width="5" height="1.3"/></g></svg>
<svg class="r" style="left:1061px;top:142px;" width="14" height="10" viewBox="0 0 14 10"><path d="M2.5 2.5 l4 4 l4 -4" fill="none" stroke="#555" stroke-width="1.3"/></svg>
<div class="r" style="left:999px;top:181px;width:328px;height:1px;background:#e4e4e4;"></div>
<div class="t" style="left:1040.00px;top:167.60px;font-size:8.5px;color:#555;-webkit-text-stroke:0.3px #555;transform:scaleX(0.970);">Name</div>
<div class="t" style="left:1119.60px;top:167.60px;font-size:8.5px;color:#555;-webkit-text-stroke:0.3px #555;transform:scaleX(1.042);">Value</div>
<div class="t" style="left:1176.55px;top:167.60px;font-size:8.5px;color:#555;-webkit-text-stroke:0.3px #555;transform:scaleX(1.007);">Units</div>
<div class="r" style="left:999px;top:203px;width:328px;height:1px;background:#ececec;"></div>
<svg class="r" style="left:1010px;top:189px;" width="12" height="10" viewBox="0 0 12 10"><path d="M2 3 l4 4 l4 -4" fill="none" stroke="#aaa" stroke-width="1.3"/></svg>
<div class="t" style="left:1029.50px;top:187.91px;font-size:10.5px;color:#3a3a3a;transform:scaleX(0.978);">Frame (Quantitative)</div>
<div class="t" style="left:1021.00px;top:209.78px;font-size:9px;color:#444;transform:scaleX(0.879);">D4σ</div>
<div class="t" style="left:1042.00px;top:209.78px;font-size:9px;color:#4a9de0;transform:scaleX(0.871);">ISO</div>
<div class="t" style="left:1106.00px;top:209.78px;font-size:9px;color:#333;transform:scaleX(0.953);">125.695</div>
<div class="t" style="left:1161.00px;top:209.78px;font-size:9px;color:#333;transform:scaleX(1.183);">μm</div>
<svg class="r" style="left:1002px;top:207px;" width="12" height="12" viewBox="0 0 12 12"><path d="M3.6 5.6 v-1.6 q0-2.5 2.4-2.5 q2.4 0 2.4 2.5 v1.6" fill="none" stroke="#666" stroke-width="1.3"/><rect x="2.3" y="5.4" width="7.4" height="5.6" rx="0.6" fill="#666"/></svg>
<div class="r" style="left:999px;top:222px;width:328px;height:18px;background:#e0e0e0;"></div>
<div class="t" style="left:1021.00px;top:227.78px;font-size:9px;color:#444;transform:scaleX(1.011);">Z Location</div>
<div class="t" style="left:1106.00px;top:227.78px;font-size:9px;color:#333;transform:scaleX(0.667);">—</div>
<div class="t" style="left:1161.00px;top:227.78px;font-size:9px;color:#333;">mm</div>
<div class="r" style="left:1103px;top:240px;width:55px;height:18px;background:#7dc487;"></div>
<div class="t" style="left:1021.00px;top:245.78px;font-size:9px;color:#444;transform:scaleX(0.968);">X Alignment</div>
<div class="t" style="left:1106.00px;top:245.78px;font-size:9px;color:#e6f5e8;transform:scaleX(0.968);">11.636</div>
<div class="t" style="left:1161.00px;top:245.78px;font-size:9px;color:#333;transform:scaleX(1.183);">μm</div>
<div class="r" style="left:999px;top:258px;width:328px;height:18px;background:#e0e0e0;"></div>
<div class="r" style="left:1103px;top:258px;width:55px;height:18px;background:#73bb7e;"></div>
<div class="t" style="left:1021.00px;top:263.78px;font-size:9px;color:#444;transform:scaleX(0.951);">Y Alignment</div>
<div class="t" style="left:1106.00px;top:263.78px;font-size:9px;color:#e6f5e8;transform:scaleX(0.967);">-14.951</div>
<div class="t" style="left:1161.00px;top:263.78px;font-size:9px;color:#333;transform:scaleX(1.183);">μm</div>
<div class="t" style="left:1021.00px;top:281.78px;font-size:9px;color:#444;transform:scaleX(0.925);">Total Power</div>
<div class="t" style="left:1071.00px;top:281.78px;font-size:9px;color:#4a9de0;transform:scaleX(0.871);">ISO</div>
<div class="t" style="left:1106.00px;top:281.78px;font-size:9px;color:#333;transform:scaleX(0.981);">43.100</div>
<div class="t" style="left:1161.00px;top:281.78px;font-size:9px;color:#333;">W</div>
<div class="r" style="left:999px;top:294px;width:328px;height:18px;background:#e0e0e0;"></div>
<div class="t" style="left:1021.00px;top:299.78px;font-size:9px;color:#444;transform:scaleX(0.904);">Avg Pwr Density</div>
<div class="t" style="left:1088.00px;top:299.78px;font-size:9px;color:#4a9de0;">ISI</div>
<div class="t" style="left:1106.00px;top:299.78px;font-size:9px;color:#333;transform:scaleX(0.949);">347,816.275</div>
<div class="t" style="left:1161.00px;top:299.78px;font-size:9px;color:#333;">W/cm²</div>
<div class="r" style="left:999px;top:333px;width:328px;height:1px;background:#ececec;"></div>
<svg class="r" style="left:1010px;top:319px;" width="12" height="10" viewBox="0 0 12 10"><path d="M2 3 l4 4 l4 -4" fill="none" stroke="#aaa" stroke-width="1.3"/></svg>
<div class="t" style="left:1029.50px;top:317.91px;font-size:10.5px;color:#3a3a3a;transform:scaleX(0.952);">Laser</div>
<div class="t" style="left:1021.00px;top:339.78px;font-size:9px;color:#444;transform:scaleX(0.923);">Waist Width</div>
<div class="t" style="left:1106.00px;top:339.78px;font-size:9px;color:#333;transform:scaleX(0.938);">101.078</div>
<div class="t" style="left:1161.00px;top:339.78px;font-size:9px;color:#333;transform:scaleX(1.183);">μm</div>
<div class="r" style="left:999px;top:352px;width:328px;height:18px;background:#e0e0e0;"></div>
<div class="t" style="left:1021.00px;top:357.78px;font-size:9px;color:#444;transform:scaleX(0.860);">Waist Location</div>
<div class="t" style="left:1106.00px;top:357.78px;font-size:9px;color:#333;transform:scaleX(0.882);">-0.064</div>
<div class="t" style="left:1161.00px;top:357.78px;font-size:9px;color:#333;">mm</div>
<div class="t" style="left:1021.00px;top:375.78px;font-size:9px;color:#444;transform:scaleX(0.943);">Pwr Density Waist</div>
<div class="t" style="left:1106.00px;top:375.78px;font-size:9px;color:#333;transform:scaleX(0.914);">4,512,710.07</div>
<div class="t" style="left:1161.00px;top:375.78px;font-size:9px;color:#333;">W/cm²</div>
<div class="r" style="left:999px;top:388px;width:328px;height:18px;background:#e0e0e0;"></div>
<div class="t" style="left:1021.00px;top:393.78px;font-size:9px;color:#444;transform:scaleX(0.953);">M²</div>
<div class="t" style="left:1036.50px;top:393.78px;font-size:9px;color:#4a9de0;transform:scaleX(0.871);">ISO</div>
<div class="t" style="left:1106.00px;top:393.78px;font-size:9px;color:#333;transform:scaleX(0.910);">1.162</div>
<div class="t" style="left:1021.00px;top:411.78px;font-size:9px;color:#444;transform:scaleX(0.901);">Divergence</div>
<div class="t" style="left:1067.50px;top:411.78px;font-size:9px;color:#4a9de0;transform:scaleX(0.871);">ISO</div>
<div class="t" style="left:1106.00px;top:411.78px;font-size:9px;color:#333;transform:scaleX(0.945);">15.812</div>
<div class="t" style="left:1161.00px;top:411.78px;font-size:9px;color:#333;transform:scaleX(0.961);">mrad</div>
<div class="r" style="left:999px;top:424px;width:328px;height:18px;background:#e0e0e0;"></div>
<div class="t" style="left:1021.00px;top:429.78px;font-size:9px;color:#444;transform:scaleX(0.899);">Rayleigh Length</div>
<div class="t" style="left:1086.50px;top:429.78px;font-size:9px;color:#4a9de0;transform:scaleX(0.733);">ISC</div>
<div class="t" style="left:1106.00px;top:429.78px;font-size:9px;color:#333;transform:scaleX(0.933);">6.392</div>
<div class="t" style="left:1161.00px;top:429.78px;font-size:9px;color:#333;">mm</div>
<div class="t" style="left:1021.00px;top:447.78px;font-size:9px;color:#444;transform:scaleX(0.833);">BPP</div>
<div class="t" style="left:1106.00px;top:447.78px;font-size:9px;color:#333;transform:scaleX(0.910);">1.598</div>
<div class="t" style="left:1161.00px;top:447.78px;font-size:9px;color:#333;transform:scaleX(0.966);">mm mrad</div>
<div class="r" style="left:999px;top:460px;width:328px;height:18px;background:#e0e0e0;"></div>
<div class="t" style="left:1021.00px;top:465.78px;font-size:9px;color:#444;">K</div>
<div class="t" style="left:1032.50px;top:465.78px;font-size:9px;color:#4a9de0;transform:scaleX(0.871);">ISO</div>
<div class="t" style="left:1106.00px;top:465.78px;font-size:9px;color:#333;transform:scaleX(0.955);">0.860</div>
<div class="r" style="left:1102.3px;top:160px;width:1.0px;height:22px;background:#e0e0e0;"></div>
<div class="r" style="left:1102.3px;top:204px;width:1.0px;height:108px;background:#cfcfcf;"></div>
<div class="r" style="left:1102.3px;top:334px;width:1.0px;height:144px;background:#cfcfcf;"></div>
<div class="r" style="left:1158px;top:160px;width:1px;height:22px;background:#e0e0e0;"></div>
<div class="r" style="left:1158px;top:204px;width:1px;height:108px;background:#cfcfcf;"></div>
<div class="r" style="left:1158px;top:334px;width:1px;height:144px;background:#cfcfcf;"></div>
<div class="r" style="left:1213.3px;top:160px;width:1.0px;height:22px;background:#e0e0e0;"></div>
<div class="r" style="left:1213.3px;top:204px;width:1.0px;height:108px;background:#cfcfcf;"></div>
<div class="r" style="left:1213.3px;top:334px;width:1.0px;height:144px;background:#cfcfcf;"></div>
<div class="r" style="left:999px;top:478px;width:328px;height:1px;background:#e8e8e8;"></div>
</div></body></html>
